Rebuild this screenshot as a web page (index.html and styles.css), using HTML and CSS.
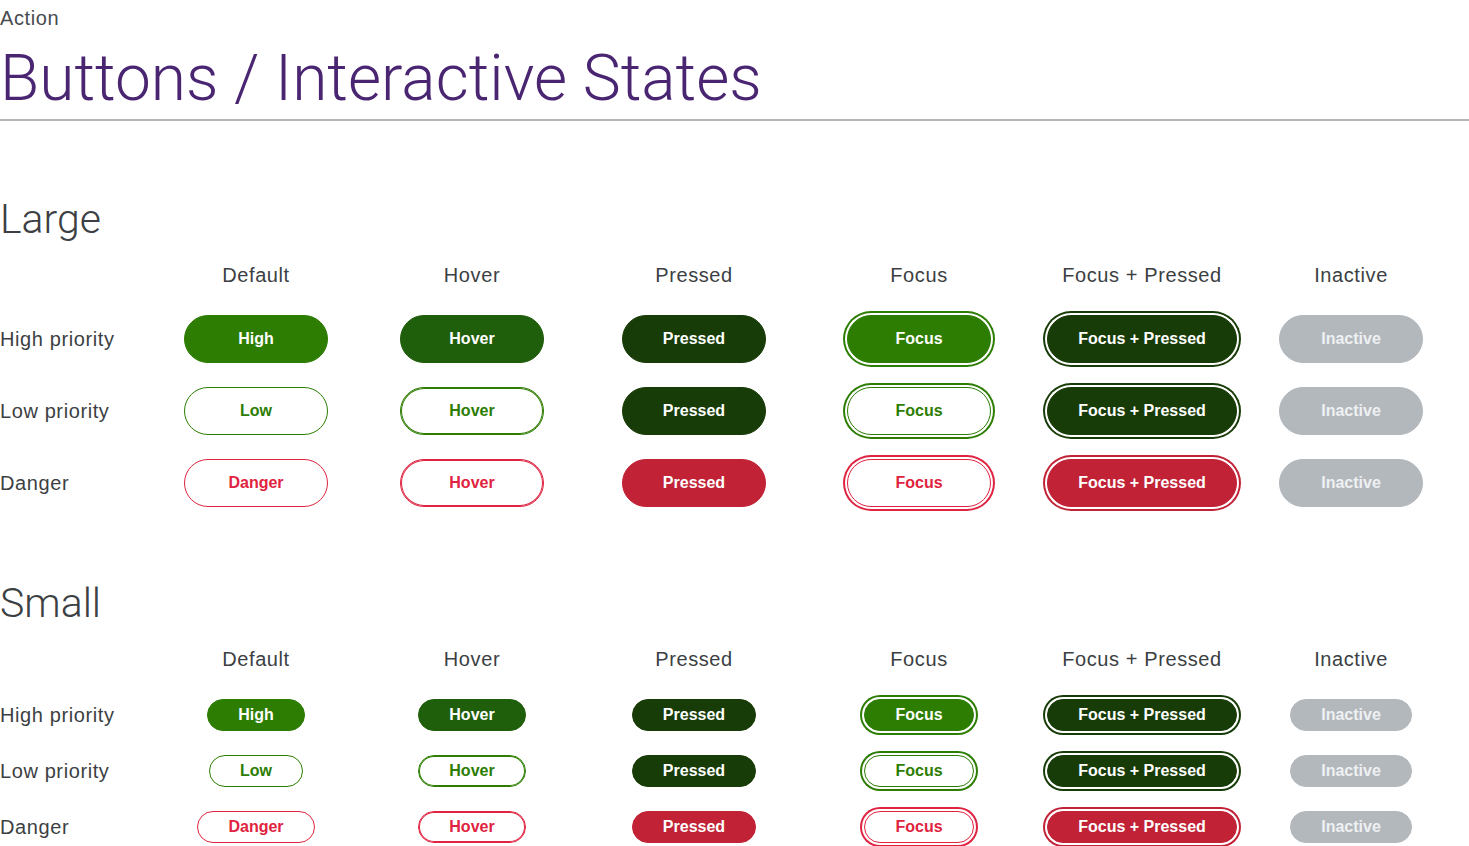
FILE: index.html
```html
<!DOCTYPE html>
<html lang="en">
<head>
<meta charset="utf-8">
<title>Buttons / Interactive States</title>
<link rel="stylesheet" href="styles.css">
</head>
<body>
<header class="page-header">
  <div class="eyebrow">Action</div>
  <h1 class="title">Buttons / Interactive States</h1>
</header>

<section class="section section-large">
  <h2 class="section-title">Large</h2>
  <div class="grid">
    <div class="cell"></div>
    <div class="col-head">Default</div>
    <div class="col-head">Hover</div>
    <div class="col-head">Pressed</div>
    <div class="col-head">Focus</div>
    <div class="col-head">Focus + Pressed</div>
    <div class="col-head">Inactive</div>

    <div class="row-label">High priority</div>
    <div class="cell"><span class="btn lg high">High</span></div>
    <div class="cell"><span class="btn lg high-hover">Hover</span></div>
    <div class="cell"><span class="btn lg pressed">Pressed</span></div>
    <div class="cell"><span class="btn lg high focus-green">Focus</span></div>
    <div class="cell"><span class="btn lg pressed focus-dark">Focus + Pressed</span></div>
    <div class="cell"><span class="btn lg inactive">Inactive</span></div>

    <div class="row-label">Low priority</div>
    <div class="cell"><span class="btn lg low">Low</span></div>
    <div class="cell"><span class="btn lg low low-hover">Hover</span></div>
    <div class="cell"><span class="btn lg pressed">Pressed</span></div>
    <div class="cell"><span class="btn lg low focus-green">Focus</span></div>
    <div class="cell"><span class="btn lg pressed focus-dark">Focus + Pressed</span></div>
    <div class="cell"><span class="btn lg inactive">Inactive</span></div>

    <div class="row-label">Danger</div>
    <div class="cell"><span class="btn lg danger">Danger</span></div>
    <div class="cell"><span class="btn lg danger danger-hover">Hover</span></div>
    <div class="cell"><span class="btn lg danger-pressed">Pressed</span></div>
    <div class="cell"><span class="btn lg danger focus-red">Focus</span></div>
    <div class="cell"><span class="btn lg danger-pressed focus-red-dark">Focus + Pressed</span></div>
    <div class="cell"><span class="btn lg inactive">Inactive</span></div>
  </div>
</section>

<section class="section section-small">
  <h2 class="section-title">Small</h2>
  <div class="grid grid-small">
    <div class="cell"></div>
    <div class="col-head">Default</div>
    <div class="col-head">Hover</div>
    <div class="col-head">Pressed</div>
    <div class="col-head">Focus</div>
    <div class="col-head">Focus + Pressed</div>
    <div class="col-head">Inactive</div>

    <div class="row-label">High priority</div>
    <div class="cell"><span class="btn sm high">High</span></div>
    <div class="cell"><span class="btn sm high-hover">Hover</span></div>
    <div class="cell"><span class="btn sm pressed">Pressed</span></div>
    <div class="cell"><span class="btn sm high focus-green">Focus</span></div>
    <div class="cell"><span class="btn sm pressed focus-dark">Focus + Pressed</span></div>
    <div class="cell"><span class="btn sm inactive">Inactive</span></div>

    <div class="row-label">Low priority</div>
    <div class="cell"><span class="btn sm low">Low</span></div>
    <div class="cell"><span class="btn sm low low-hover">Hover</span></div>
    <div class="cell"><span class="btn sm pressed">Pressed</span></div>
    <div class="cell"><span class="btn sm low focus-green">Focus</span></div>
    <div class="cell"><span class="btn sm pressed focus-dark">Focus + Pressed</span></div>
    <div class="cell"><span class="btn sm inactive">Inactive</span></div>

    <div class="row-label">Danger</div>
    <div class="cell"><span class="btn sm danger">Danger</span></div>
    <div class="cell"><span class="btn sm danger danger-hover">Hover</span></div>
    <div class="cell"><span class="btn sm danger-pressed">Pressed</span></div>
    <div class="cell"><span class="btn sm danger focus-red">Focus</span></div>
    <div class="cell"><span class="btn sm danger-pressed focus-red-dark">Focus + Pressed</span></div>
    <div class="cell"><span class="btn sm inactive">Inactive</span></div>
  </div>
</section>
</body>
</html>
```

FILE: styles.css
```css
* { box-sizing: border-box; }

html, body {
  margin: 0;
  padding: 0;
  background: #ffffff;
}

body {
  font-family: "Liberation Sans", Arial, sans-serif;
  color: #3c3f43;
  overflow: hidden;
}

.page-header {
  border-bottom: 2px solid #b5b5b5;
  padding-bottom: 9px;
}

.eyebrow {
  font-size: 20px;
  letter-spacing: 0.6px;
  line-height: 20px;
  padding-top: 8px;
  color: #474a4e;
}

.title {
  margin: 19px 0 0 0;
  font-family: Roboto, "Liberation Sans", sans-serif;
  font-weight: 300;
  font-size: 64px;
  line-height: 63px;
  color: #4a2672;
  white-space: nowrap;
}

.section-title {
  margin: 0;
  font-family: Roboto, "Liberation Sans", sans-serif;
  font-weight: 300;
  font-size: 41px;
  line-height: 48px;
  color: #3c3f43;
}

.section-large { margin-top: 74px; }
.section-small { margin-top: 60px; }

.grid {
  display: grid;
  grid-template-columns: 148px 216px 216px 228px 222px 224px 194px;
  grid-template-rows: 48px repeat(3, 72px);
  margin-top: 12px;
}

.grid-small {
  grid-template-rows: 48px repeat(3, 56px);
  margin-top: 12px;
}

.col-head {
  align-self: start;
  text-align: center;
  font-size: 20px;
  letter-spacing: 0.6px;
  line-height: 40px;
  color: #3c3f43;
  white-space: nowrap;
}

.row-label {
  display: flex;
  align-items: center;
  font-size: 20px;
  letter-spacing: 0.6px;
  color: #3c3f43;
  white-space: nowrap;
}

.cell {
  display: flex;
  align-items: center;
  justify-content: center;
}

.btn {
  display: inline-flex;
  align-items: center;
  justify-content: center;
  border: 1px solid transparent;
  padding: 0 30px;
  font-family: "Liberation Sans", Arial, sans-serif;
  font-weight: 700;
  font-size: 16px;
  white-space: nowrap;
  color: #ffffff;
}

.lg {
  height: 48px;
  min-width: 144px;
  border-radius: 24px;
}

.sm {
  height: 32px;
  border-radius: 16px;
}

.high {
  background: #2d7d02;
  border-color: #2d7d02;
}

.high-hover {
  background: #1f5e0a;
  border-color: #1f5e0a;
}

.pressed {
  background: #183c07;
  border-color: #183c07;
}

.low {
  background: #ffffff;
  border-color: #2d7d02;
  color: #2d7d02;
}

.low-hover {
  box-shadow: inset 0 0 0 1px #2d7d02;
}

.danger {
  background: #ffffff;
  border-color: #df2340;
  color: #df2340;
}

.danger-hover {
  box-shadow: inset 0 0 0 1px #df2340;
}

.danger-pressed {
  background: #c12236;
  border-color: #c12236;
}

.inactive {
  background: #b3b8bd;
  border-color: #b3b8bd;
  color: #eef0f2;
}

.focus-green {
  box-shadow: 0 0 0 2px #ffffff, 0 0 0 4px #2d7d02;
}

.focus-dark {
  box-shadow: 0 0 0 2px #ffffff, 0 0 0 4px #183c07;
}

.focus-red {
  box-shadow: 0 0 0 2px #ffffff, 0 0 0 4px #df2340;
}

.focus-red-dark {
  box-shadow: 0 0 0 2px #ffffff, 0 0 0 4px #c12236;
}
```
